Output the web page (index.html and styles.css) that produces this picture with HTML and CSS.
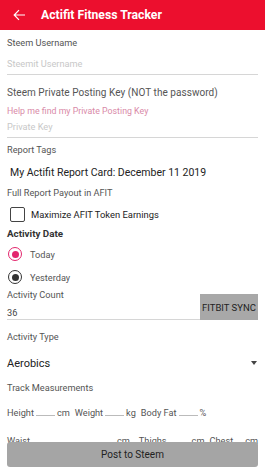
FILE: index.html
```html
<!DOCTYPE html>
<html lang="en">
<head>
    <meta charset="UTF-8">
    <meta name="viewport" content="width=device-width, initial-scale=1.0">
    <title>Actifit Fitness Tracker</title>
    <link rel="stylesheet" href="styles.css">
</head>
<body>
    <!-- top bar -->
    <header class="app-bar">
        <svg class="back" width="13" height="12" viewBox="0 0 13 12">
            <path d="M12 6H1.5M6 1.2L1.2 6L6 10.8" fill="none" stroke="#fff" stroke-width="1.2"/>
        </svg>
        <h1 class="app-title">Actifit Fitness Tracker</h1>
    </header>

    <main class="form">
        <div class="label first">Steem Username</div>
        <div class="input"><span class="placeholder">Steemit Username</span></div>

        <div class="label key-label">Steem Private Posting Key (NOT the password)</div>
        <a class="help" href="#">Help me find my Private Posting Key</a>
        <div class="input key-input"><span class="placeholder">Private Key</span></div>

        <div class="label tags-label">Report Tags</div>
        <div class="report-title">My Actifit Report Card: December 11 2019</div>

        <div class="label payout-label">Full Report Payout in AFIT</div>
        <div class="check-row">
            <span class="checkbox"></span>
            <span>Maximize AFIT Token Earnings</span>
        </div>

        <div class="section-title">Activity Date</div>
        <div class="radio-row today">
            <span class="radio on"></span>
            <span>Today</span>
        </div>
        <div class="radio-row yesterday">
            <span class="radio"></span>
            <span>Yesterday</span>
        </div>

        <div class="count-row">
            <div class="count-field">
                <div class="label">Activity Count</div>
                <div class="count-input">36</div>
            </div>
            <button class="sync-button">FITBIT SYNC</button>
        </div>

        <div class="label type-label">Activity Type</div>
        <div class="select">
            <span>Aerobics</span>
            <span class="caret"></span>
        </div>

        <div class="label measure-label">Track Measurements</div>
        <div class="measure-row">
            <span>Height</span><span class="blank"></span><span>cm</span>
            <span class="gap">Weight</span><span class="blank"></span><span>kg</span>
            <span class="gap">Body Fat</span><span class="blank"></span><span>%</span>
        </div>
        <div class="measure-row waist-row">
            <span>Waist</span><span class="blank wide"></span><span>cm</span>
            <span class="gap-lg">Thighs</span><span class="blank mid"></span><span>cm</span>
            <span class="gap">Chest</span><span class="blank fill"></span><span>cm</span>
        </div>
    </main>

    <button class="post-button">Post to Steem</button>
</body>
</html>
```

FILE: styles.css
```css
/* base */
body {
    margin: 0;
    padding: 0;
    font-family: Roboto, "Liberation Sans", Arial, sans-serif;
    background-color: #fff;
    color: #555;
    width: 265px;
    height: 471px;
    overflow: hidden;
}

/* red top bar */
.app-bar {
    height: 30px;
    background-color: #ec0f2e;
    display: flex;
    align-items: center;
}

.back {
    margin-left: 13px;
}

.app-title {
    margin: 0 0 0 15px;
    font-size: 12.2px;
    font-weight: bold;
    color: #fff;
}

/* form body */
.form {
    padding: 0 7px;
}

.label {
    font-size: 9.2px;
    line-height: 14px;
    color: #555;
}

.first {
    margin-top: 6px;
}

.input {
    margin-top: 7px;
    line-height: 14px;
    padding-bottom: 3px;
    border-bottom: 1px solid #d6d6d6;
    font-size: 9.2px;
}

.placeholder {
    color: #c8c8c8;
}

.key-label {
    margin-top: 11px;
    font-size: 10px;
    letter-spacing: 0.05px;
}

.help {
    display: block;
    margin-top: 5px;
    font-size: 8.8px;
    line-height: 12px;
    color: #d98aa8;
    text-decoration: none;
}

.key-input {
    margin-top: 3px;
}

.tags-label {
    margin-top: 5px;
}

.report-title {
    margin-top: 8px;
    padding-left: 3px;
    font-size: 10.5px;
    line-height: 16px;
    color: #222;
}

.payout-label {
    margin-top: 5px;
}

/* checkbox */
.check-row {
    margin-top: 5px;
    height: 18px;
    display: flex;
    align-items: center;
    font-size: 9.4px;
    color: #222;
}

.checkbox {
    width: 13px;
    height: 13px;
    margin-left: 3px;
    margin-right: 6px;
    border: 1.5px solid #444;
    border-radius: 2px;
}

.section-title {
    margin-top: 4px;
    font-size: 9.8px;
    line-height: 14px;
    font-weight: bold;
    color: #333;
}

/* radios */
.radio-row {
    height: 18px;
    display: flex;
    align-items: center;
    font-size: 9.2px;
    color: #555;
}

.today {
    margin-top: 4px;
}

.yesterday {
    margin-top: 5px;
}

.radio {
    box-sizing: border-box;
    width: 14px;
    height: 14px;
    margin-left: 1px;
    margin-right: 8px;
    border: 1.5px solid #333;
    border-radius: 50%;
    display: flex;
    align-items: center;
    justify-content: center;
}

.radio::after {
    content: "";
    width: 7px;
    height: 7px;
    border-radius: 50%;
    background-color: #333;
}

.radio.on {
    border-color: #e3266d;
}

.radio.on::after {
    background-color: #e3266d;
}

/* activity count + sync */
.count-row {
    margin-top: 2px;
    display: flex;
    align-items: flex-end;
}

.count-field {
    flex: 1;
}

.count-input {
    margin-top: 5px;
    font-size: 9.2px;
    line-height: 12px;
    color: #444;
    border-bottom: 1px solid #d6d6d6;
}

.sync-button {
    width: 58px;
    height: 26px;
    margin: 0;
    padding: 0;
    border: none;
    background-color: #a8a8a8;
    font-family: Roboto, "Liberation Sans", Arial, sans-serif;
    font-size: 9.5px;
    color: #222;
}

.type-label {
    margin-top: 10px;
}

/* dropdown */
.select {
    margin-top: 11px;
    height: 16px;
    display: flex;
    align-items: center;
    justify-content: space-between;
    font-size: 11px;
    color: #222;
}

.caret {
    width: 0;
    height: 0;
    margin-right: 1px;
    border-left: 3px solid transparent;
    border-right: 3px solid transparent;
    border-top: 4px solid #444;
}

.measure-label {
    margin-top: 10px;
}

/* measurement rows */
.measure-row {
    margin-top: 9px;
    display: flex;
    align-items: baseline;
    font-size: 9.2px;
    line-height: 14px;
    color: #555;
    white-space: nowrap;
}

.waist-row {
    margin-top: 12px;
}

.blank {
    display: inline-block;
    width: 19px;
    height: 11px;
    margin: 0 2px;
    border-bottom: 1px solid #bbb;
}

.blank.wide {
    width: 83px;
}

.blank.mid {
    width: 21px;
}

.blank.fill {
    flex: 1;
}

.gap {
    margin-left: 5px;
}

.gap-lg {
    margin-left: 9px;
}

/* bottom button */
.post-button {
    position: fixed;
    left: 7px;
    right: 7px;
    bottom: 4px;
    height: 25px;
    border: none;
    border-radius: 3px;
    background-color: #a5a5a5;
    font-family: Roboto, "Liberation Sans", Arial, sans-serif;
    font-size: 10px;
    color: #222;
}
```
